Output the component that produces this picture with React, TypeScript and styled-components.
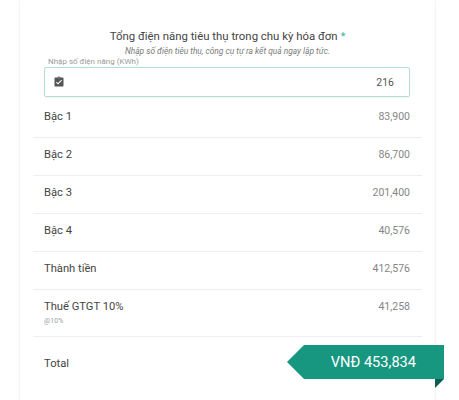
import React from "react";
import styled, { createGlobalStyle } from "styled-components";
import { MdAssignmentTurnedIn } from "react-icons/md";

////////////////////////////////////////////////////////////////////// Global

const Global = createGlobalStyle`
  html, body {
    margin: 0;
    padding: 0;
    background: #fff;
    font-family: Roboto, "Noto Sans", Arial, sans-serif;
    color: #3a3a3a;
  }
`;

////////////////////////////////////////////////////////////////////// Card

const Card = styled.div`
  position: relative;
  width: 415px;
  min-height: 420px;
  margin-left: 20px;
  background: #fff;
  box-shadow: 0 0 2px rgba(0, 0, 0, 0.12);
  padding-top: 29px;
  box-sizing: border-box;
`;

const Title = styled.h3`
  margin: 0;
  text-align: center;
  font-size: 11.4px;
  font-weight: 400;
  color: #444;
  line-height: 15px;

  span {
    color: #3bb39c;
  }
`;

const Hint = styled.p`
  margin: 1px 0 0;
  text-align: center;
  font-size: 8.4px;
  font-style: italic;
  color: #7a7a7a;
  line-height: 12px;
`;

////////////////////////////////////////////////////////////////////// Field

const Field = styled.div`
  margin: 0 25px 0 24px;
`;

const FieldLabel = styled.label`
  display: block;
  font-size: 8px;
  line-height: 10px;
  color: #9a9a9a;
  padding-left: 4px;
`;

const InputBox = styled.div`
  display: flex;
  align-items: center;
  height: 30px;
  box-sizing: border-box;
  border: 1px solid #b4ddd4;
  border-radius: 2px;
  box-shadow: 0 1px 2px rgba(0, 0, 0, 0.06);
  padding: 0 15px 0 8px;

  svg {
    color: #555;
    width: 12px;
    height: 12px;
  }
`;

const Value = styled.div`
  flex: 1;
  text-align: right;
  font-size: 10.5px;
  color: #555;
`;

////////////////////////////////////////////////////////////////////// Rows

const Rows = styled.div`
  margin: 3px 13px 0;
`;

const Row = styled.div<{ $h?: number }>`
  display: flex;
  align-items: baseline;
  justify-content: space-between;
  height: ${(p) => p.$h ?? 38}px;
  box-sizing: border-box;
  padding: 9px 12px 0 11px;
  border-bottom: 1px solid #eeeeee;
`;

const Label = styled.div`
  font-size: 11.2px;
  line-height: 15px;
  color: #444;
`;

const Sub = styled.div`
  font-size: 7px;
  line-height: 12px;
  color: #a0a0a0;
  margin-top: 1px;
`;

const Amount = styled.div`
  font-size: 10.5px;
  color: #858585;
`;

const TotalRow = styled.div`
  position: relative;
  height: 50px;
  padding: 19px 0 0 11px;
  box-sizing: border-box;
`;

const Ribbon = styled.div`
  position: absolute;
  top: 8px;
  right: -22px;
  width: 157px;
  height: 34px;
  display: flex;
  align-items: center;
  justify-content: flex-end;
  padding-right: 28px;
  box-sizing: border-box;
  background: #17977f;
  color: #fff;
  font-size: 14.6px;
  clip-path: polygon(17px 0, 100% 0, 100% 100%, 17px 100%, 0 50%);
`;

const Fold = styled.div`
  position: absolute;
  top: 42px;
  right: -22px;
  width: 9px;
  height: 9px;
  background: #0c5e50;
  clip-path: polygon(0 0, 100% 0, 0 100%);
`;

////////////////////////////////////////////////////////////////////// Data

const tiers = [
  ["Bậc 1", "83,900"],
  ["Bậc 2", "86,700"],
  ["Bậc 3", "201,400"],
  ["Bậc 4", "40,576"],
  ["Thành tiền", "412,576"],
];

export default function App() {
  return (
    <>
      <Global />
      <Card>
        <Title>
          Tổng điện năng tiêu thụ trong chu kỳ hóa đơn <span>*</span>
        </Title>
        <Hint>Nhập số điện tiêu thụ, công cụ tự ra kết quả ngay lập tức.</Hint>
        <Field>
          <FieldLabel>Nhập số điện năng (KWh)</FieldLabel>
          <InputBox>
            <MdAssignmentTurnedIn />
            <Value>216</Value>
          </InputBox>
        </Field>
        <Rows>
          {tiers.map(([name, val]) => (
            <Row key={name}>
              <Label>{name}</Label>
              <Amount>{val}</Amount>
            </Row>
          ))}
          <Row $h={47}>
            <div>
              <Label>Thuế GTGT 10%</Label>
              <Sub>@10%</Sub>
            </div>
            <Amount>41,258</Amount>
          </Row>
          <TotalRow>
            <Label>Total</Label>
            <Ribbon>VNĐ 453,834</Ribbon>
            <Fold />
          </TotalRow>
        </Rows>
      </Card>
    </>
  );
}
